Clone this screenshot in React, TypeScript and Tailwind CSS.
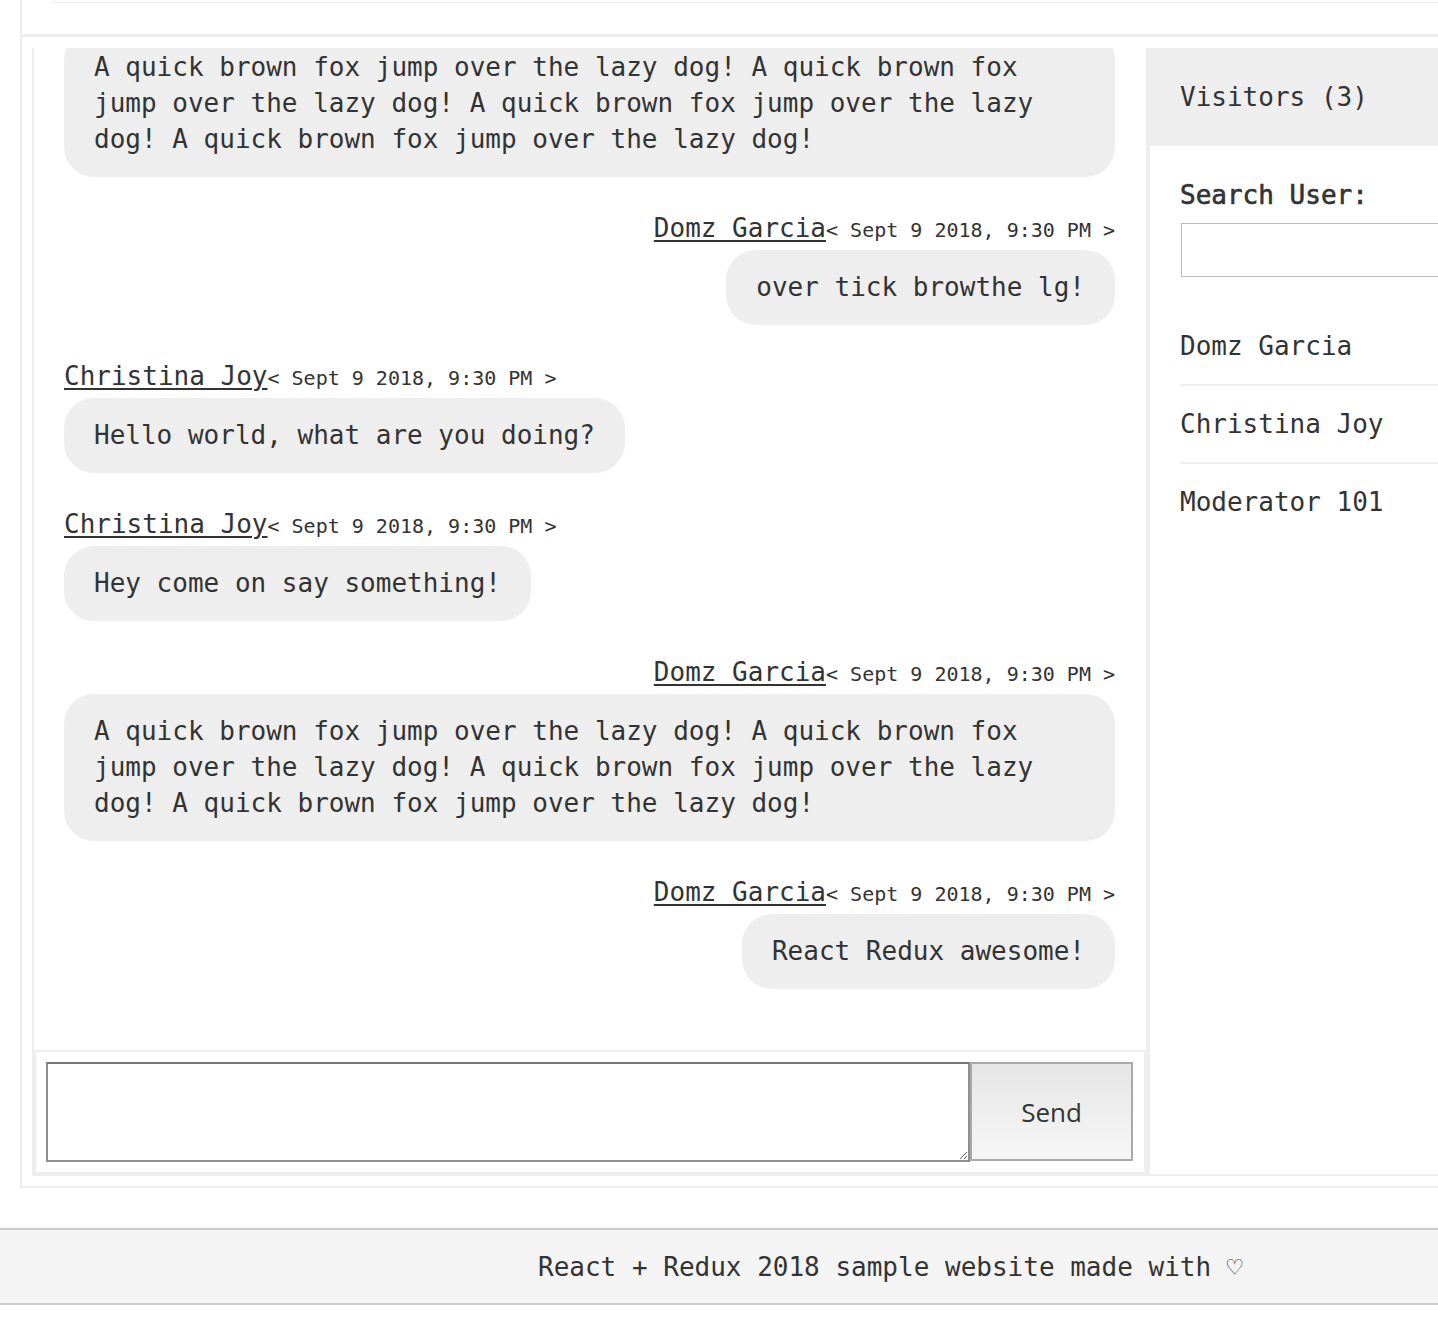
import React from "react";

type Msg = { name: string; mine: boolean; text: string; hideHeader?: boolean };

const LONG =
  "A quick brown fox jump over the lazy dog! A quick brown fox jump over the lazy dog! A quick brown fox jump over the lazy dog! A quick brown fox jump over the lazy dog!";

const messages: Msg[] = [
  { name: "Christina Joy", mine: false, text: LONG, hideHeader: true },
  { name: "Domz Garcia", mine: true, text: "over tick browthe lg!" },
  { name: "Christina Joy", mine: false, text: "Hello world, what are you doing?" },
  { name: "Christina Joy", mine: false, text: "Hey come on say something!" },
  { name: "Domz Garcia", mine: true, text: LONG },
  { name: "Domz Garcia", mine: true, text: "React Redux awesome!" },
];

function Message({ m }: { m: Msg }) {
  return (
    <div className={`flex flex-col mb-[33px] ${m.mine ? "items-end" : "items-start"}`}>
      {!m.hideHeader && (
        <div className="h-[36px] leading-[36px] mb-[4px] whitespace-nowrap overflow-visible">
          <span className="text-[26px] underline decoration-[2px] underline-offset-[3px]">{m.name}</span>
          <span className="text-[20px] leading-none whitespace-pre">{"< Sept 9 2018, 9:30 PM >"}</span>
        </div>
      )}
      <div className="max-w-full rounded-[30px] bg-[#eeeeee] px-[30px] pt-[19px] pb-[20px] text-[26px] leading-[36px] text-left">
        {m.text}
      </div>
    </div>
  );
}

export default function App() {
  return (
    <div className="w-[1438px] h-[1318px] overflow-hidden bg-white text-[#333333] font-['DejaVu_Sans_Mono',monospace] text-[26px] leading-[36px]">
      <div className="ml-[20px] w-[1600px] border-l-2 border-b-2 border-[#eeeeee] pb-[10px]">
        <div className="h-[34px] pl-[30px]">
          <div className="h-[3px] border-l border-b border-[#eeeeee]" />
        </div>
        <div className="border-t-[3px] border-[#eeeeee] pt-[11px] pl-[10px]">
          <div className="flex h-[1128px]">
            <div className="w-[1114px] shrink-0 flex flex-col border-l-2 border-b-2 border-[#eeeeee]">
              <div className="flex-1 min-h-0 overflow-hidden flex flex-col justify-end pl-[30px] pr-[31px] pb-[28px]">
                {messages.map((m, i) => (
                  <Message key={i} m={m} />
                ))}
              </div>
              <div className="h-[124px] shrink-0 flex border-2 border-[#eeeeee] pt-[10px] pl-[10px] pr-[11px] pb-[10px]">
                <textarea className="flex-1 h-[100px] border-2 border-[#8f8f8f] border-t-[#767676] bg-white outline-none" />
                <button className="w-[163px] h-[99px] border-2 border-[#aaaaaa] bg-gradient-to-b from-[#e6e6e6] to-[#f6f6f6] font-['Open_Sans',sans-serif] text-[26px] text-[#333333]">
                  Send
                </button>
              </div>
            </div>
            <div className="flex-1 flex flex-col">
              <div className="h-[98px] shrink-0 bg-[#eeeeee] pl-[34px] flex items-center">
                Visitors (3)
              </div>
              <div className="flex-1 border-l-4 border-b-2 border-[#eeeeee] pl-[30px] pt-[31px]">
                <div className="leading-[36px] [-webkit-text-stroke:0.6px_#333333]">Search User:</div>
                <input className="mt-[10px] ml-[1px] w-[400px] h-[54px] border border-[#bbbbbb] outline-none" />
                <div className="mt-[31px]">
                  <div className="py-[20px] leading-[36px] border-b-2 border-[#eeeeee]">Domz Garcia</div>
                  <div className="py-[20px] leading-[36px] border-b-2 border-[#eeeeee]">Christina Joy</div>
                  <div className="py-[20px] leading-[36px]">Moderator 101</div>
                </div>
              </div>
            </div>
          </div>
        </div>
      </div>
      <div className="mt-[40px] h-[77px] border-t-2 border-b-2 border-[#cccccc] bg-[#f4f4f4] flex items-center pl-[538px]">
        React + Redux 2018 sample website made with ♡
      </div>
    </div>
  );
}
